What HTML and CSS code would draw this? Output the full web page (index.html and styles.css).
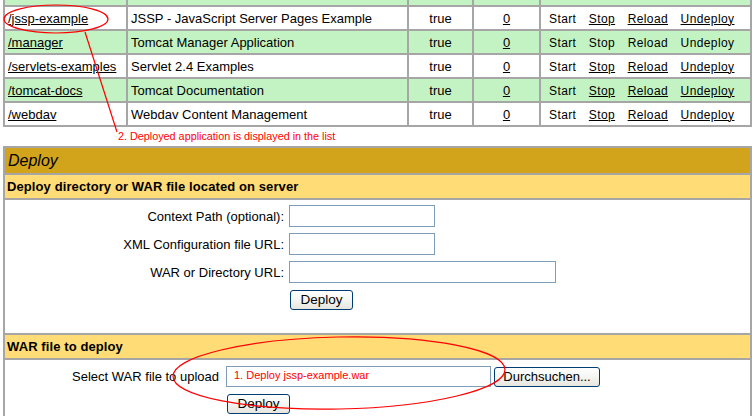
FILE: index.html
```html
<!DOCTYPE html>
<html>
<head>
<meta charset="utf-8">
<link rel="stylesheet" href="styles.css">
</head>
<body>
<div class="page">
  <table class="apps">
    <colgroup>
      <col class="c1"><col class="c2"><col class="c3"><col class="c4"><col class="c5">
    </colgroup>
    <tr class="strip"><td></td><td></td><td></td><td></td><td></td></tr>
    <tr class="odd">
      <td><a href="#">/jssp-example</a></td>
      <td>JSSP - JavaScript Server Pages Example</td>
      <td class="ctr">true</td>
      <td class="ctr"><a href="#">0</a></td>
      <td><span class="cmds"><span>Start</span><a href="#">Stop</a><a href="#">Reload</a><a href="#">Undeploy</a></span></td>
    </tr>
    <tr class="even">
      <td><a href="#">/manager</a></td>
      <td>Tomcat Manager Application</td>
      <td class="ctr">true</td>
      <td class="ctr"><a href="#">0</a></td>
      <td><span class="cmds"><span>Start</span><span>Stop</span><span>Reload</span><span>Undeploy</span></span></td>
    </tr>
    <tr class="odd">
      <td><a href="#">/servlets-examples</a></td>
      <td>Servlet 2.4 Examples</td>
      <td class="ctr">true</td>
      <td class="ctr"><a href="#">0</a></td>
      <td><span class="cmds"><span>Start</span><a href="#">Stop</a><a href="#">Reload</a><a href="#">Undeploy</a></span></td>
    </tr>
    <tr class="even">
      <td><a href="#">/tomcat-docs</a></td>
      <td>Tomcat Documentation</td>
      <td class="ctr">true</td>
      <td class="ctr"><a href="#">0</a></td>
      <td><span class="cmds"><span>Start</span><a href="#">Stop</a><a href="#">Reload</a><a href="#">Undeploy</a></span></td>
    </tr>
    <tr class="odd">
      <td><a href="#">/webdav</a></td>
      <td>Webdav Content Management</td>
      <td class="ctr">true</td>
      <td class="ctr"><a href="#">0</a></td>
      <td><span class="cmds"><span>Start</span><a href="#">Stop</a><a href="#">Reload</a><a href="#">Undeploy</a></span></td>
    </tr>
  </table>

  <div class="note-2">2. Deployed application is displayed in the list</div>

  <div class="deploy">
    <div class="title">Deploy</div>
    <div class="sub">Deploy directory or WAR file located on server</div>
    <div class="server-form">
      <label class="lbl">Context Path (optional):</label>
      <input class="txt short" type="text">
      <label class="lbl">XML Configuration file URL:</label>
      <input class="txt short" type="text">
      <label class="lbl">WAR or Directory URL:</label>
      <input class="txt long" type="text">
      <span></span>
      <button class="btn btn-deploy1" type="button">Deploy</button>
    </div>
    <div class="sub">WAR file to deploy</div>
    <div class="upload-form">
      <label class="lbl">Select WAR file to upload</label>
      <div class="file-row">
        <div class="file-box"><span class="note-1">1. Deploy jssp-example.war</span></div>
        <button class="btn btn-browse" type="button">Durchsuchen...</button>
      </div>
      <span></span>
      <button class="btn btn-deploy2" type="button">Deploy</button>
    </div>
  </div>

  <svg class="marks" width="755" height="416" viewBox="0 0 755 416">
    <ellipse cx="56" cy="19" rx="52" ry="14" fill="none" stroke="#ff0000" stroke-width="1.2"/>
    <line x1="85" y1="32" x2="117" y2="132" stroke="#ff0000" stroke-width="1.2"/>
    <ellipse cx="339" cy="373" rx="166" ry="36" fill="none" stroke="#ff0000" stroke-width="1.2" transform="rotate(-1.2 339 373)"/>
  </svg>
</div>
</body>
</html>
```

FILE: styles.css
```css
html, body {
  margin: 0;
  padding: 0;
  background: #ffffff;
}

body {
  font-family: "Liberation Sans", Arial, sans-serif;
  font-size: 13px;
  color: #000000;
  overflow: hidden;
}

.page {
  position: relative;
  width: 755px;
  height: 416px;
  padding-left: 3px;
  box-sizing: border-box;
  overflow: hidden;
}

/* applications table */
.apps {
  table-layout: fixed;
  width: 749px;
  border-collapse: separate;
  border-spacing: 2px;
  background: #a6a6a6;
  margin-top: -2px;
}

.apps col.c1 { width: 121px; }
.apps col.c2 { width: 279px; }
.apps col.c3 { width: 63px; }
.apps col.c4 { width: 65px; }
.apps col.c5 { width: 209px; }

.apps tr { height: 22px; }

.apps td {
  height: 22px;
  box-sizing: border-box;
  padding: 1px 0 0 3px;
  white-space: nowrap;
  overflow: hidden;
  font-size: 13px;
  line-height: 20px;
  vertical-align: middle;
}

.apps tr.strip { height: 5px; }

.apps tr.strip td {
  height: 5px;
  line-height: 0;
  padding: 0;
  background: #c3f3c3;
}

.apps tr.odd td { background: #ffffff; }
.apps tr.even td { background: #c3f3c3; }

.apps td.ctr {
  text-align: center;
  padding-left: 0;
}

.apps a {
  color: #000000;
  text-decoration: underline;
}

.cmds {
  display: inline-flex;
  align-items: center;
  vertical-align: top;
  height: 20px;
  line-height: 20px;
  gap: 12.5px;
  padding-left: 5px;
  font-family: "Liberation Sans", Arial, sans-serif;
  font-size: 12px;
  letter-spacing: 0.4px;
}

.note-2 {
  height: 19px;
  padding-left: 115px;
  color: #ff0000;
  font-size: 10.8px;
  line-height: 19px;
  box-sizing: border-box;
}

/* deploy box */
.deploy {
  width: 749px;
  box-sizing: border-box;
  background: #a6a6a6;
  padding: 2px;
  display: flex;
  flex-direction: column;
  gap: 2px;
  height: 300px;
}

.title {
  height: 25px;
  background: #d2a41c;
  font-style: italic;
  font-size: 16px;
  line-height: 25px;
  padding-left: 3px;
}

.sub {
  height: 23px;
  background: #ffdc75;
  font-weight: bold;
  font-size: 13px;
  line-height: 23px;
  padding-left: 2px;
  letter-spacing: 0.1px;
}

.server-form {
  background: #ffffff;
  height: 133px;
  box-sizing: border-box;
  padding-top: 5px;
  display: grid;
  grid-template-columns: 279px 1fr;
  column-gap: 5px;
  row-gap: 6px;
  grid-auto-rows: 22px;
  align-items: center;
}

.upload-form {
  background: #ffffff;
  flex: 1;
  box-sizing: border-box;
  padding-top: 6px;
  display: grid;
  grid-template-columns: 214px 1fr;
  column-gap: 7px;
  grid-template-rows: 21px 20px;
  row-gap: 7px;
  align-content: start;
  align-items: center;
}

.lbl {
  text-align: right;
  white-space: nowrap;
  font-size: 13px;
}

.txt {
  height: 22px;
  box-sizing: border-box;
  border: 1px solid #7f9db9;
  padding: 0 2px;
  margin: 0;
  font-family: "Liberation Sans", Arial, sans-serif;
  font-size: 13px;
  background: #ffffff;
}

.txt.short { width: 146px; }
.txt.long { width: 267px; }

.file-row {
  display: flex;
  align-items: center;
  gap: 3px;
}

.file-box {
  width: 265px;
  height: 21px;
  box-sizing: border-box;
  border: 1px solid #7f9db9;
  padding-left: 7px;
  display: flex;
  align-items: center;
}

.note-1 {
  color: #ff0000;
  font-size: 11px;
  margin-top: -3px;
}

.btn {
  height: 20px;
  box-sizing: border-box;
  border: 1px solid #003c74;
  border-radius: 3px;
  background: linear-gradient(#ffffff 0%, #f6f6f3 45%, #e6e5de 100%);
  font-family: "Liberation Sans", Arial, sans-serif;
  font-size: 13.5px;
  color: #000000;
  padding: 0;
  margin: 0;
  line-height: 18px;
}

.btn-deploy1 {
  width: 63px;
  margin-left: 1px;
  justify-self: start;
}

.btn-deploy2 {
  width: 63px;
  margin-left: 1px;
  justify-self: start;
}

.btn-browse {
  width: 106px;
  height: 20px;
  font-size: 13px;
}

.marks {
  position: absolute;
  left: 0;
  top: 0;
  pointer-events: none;
}
```
